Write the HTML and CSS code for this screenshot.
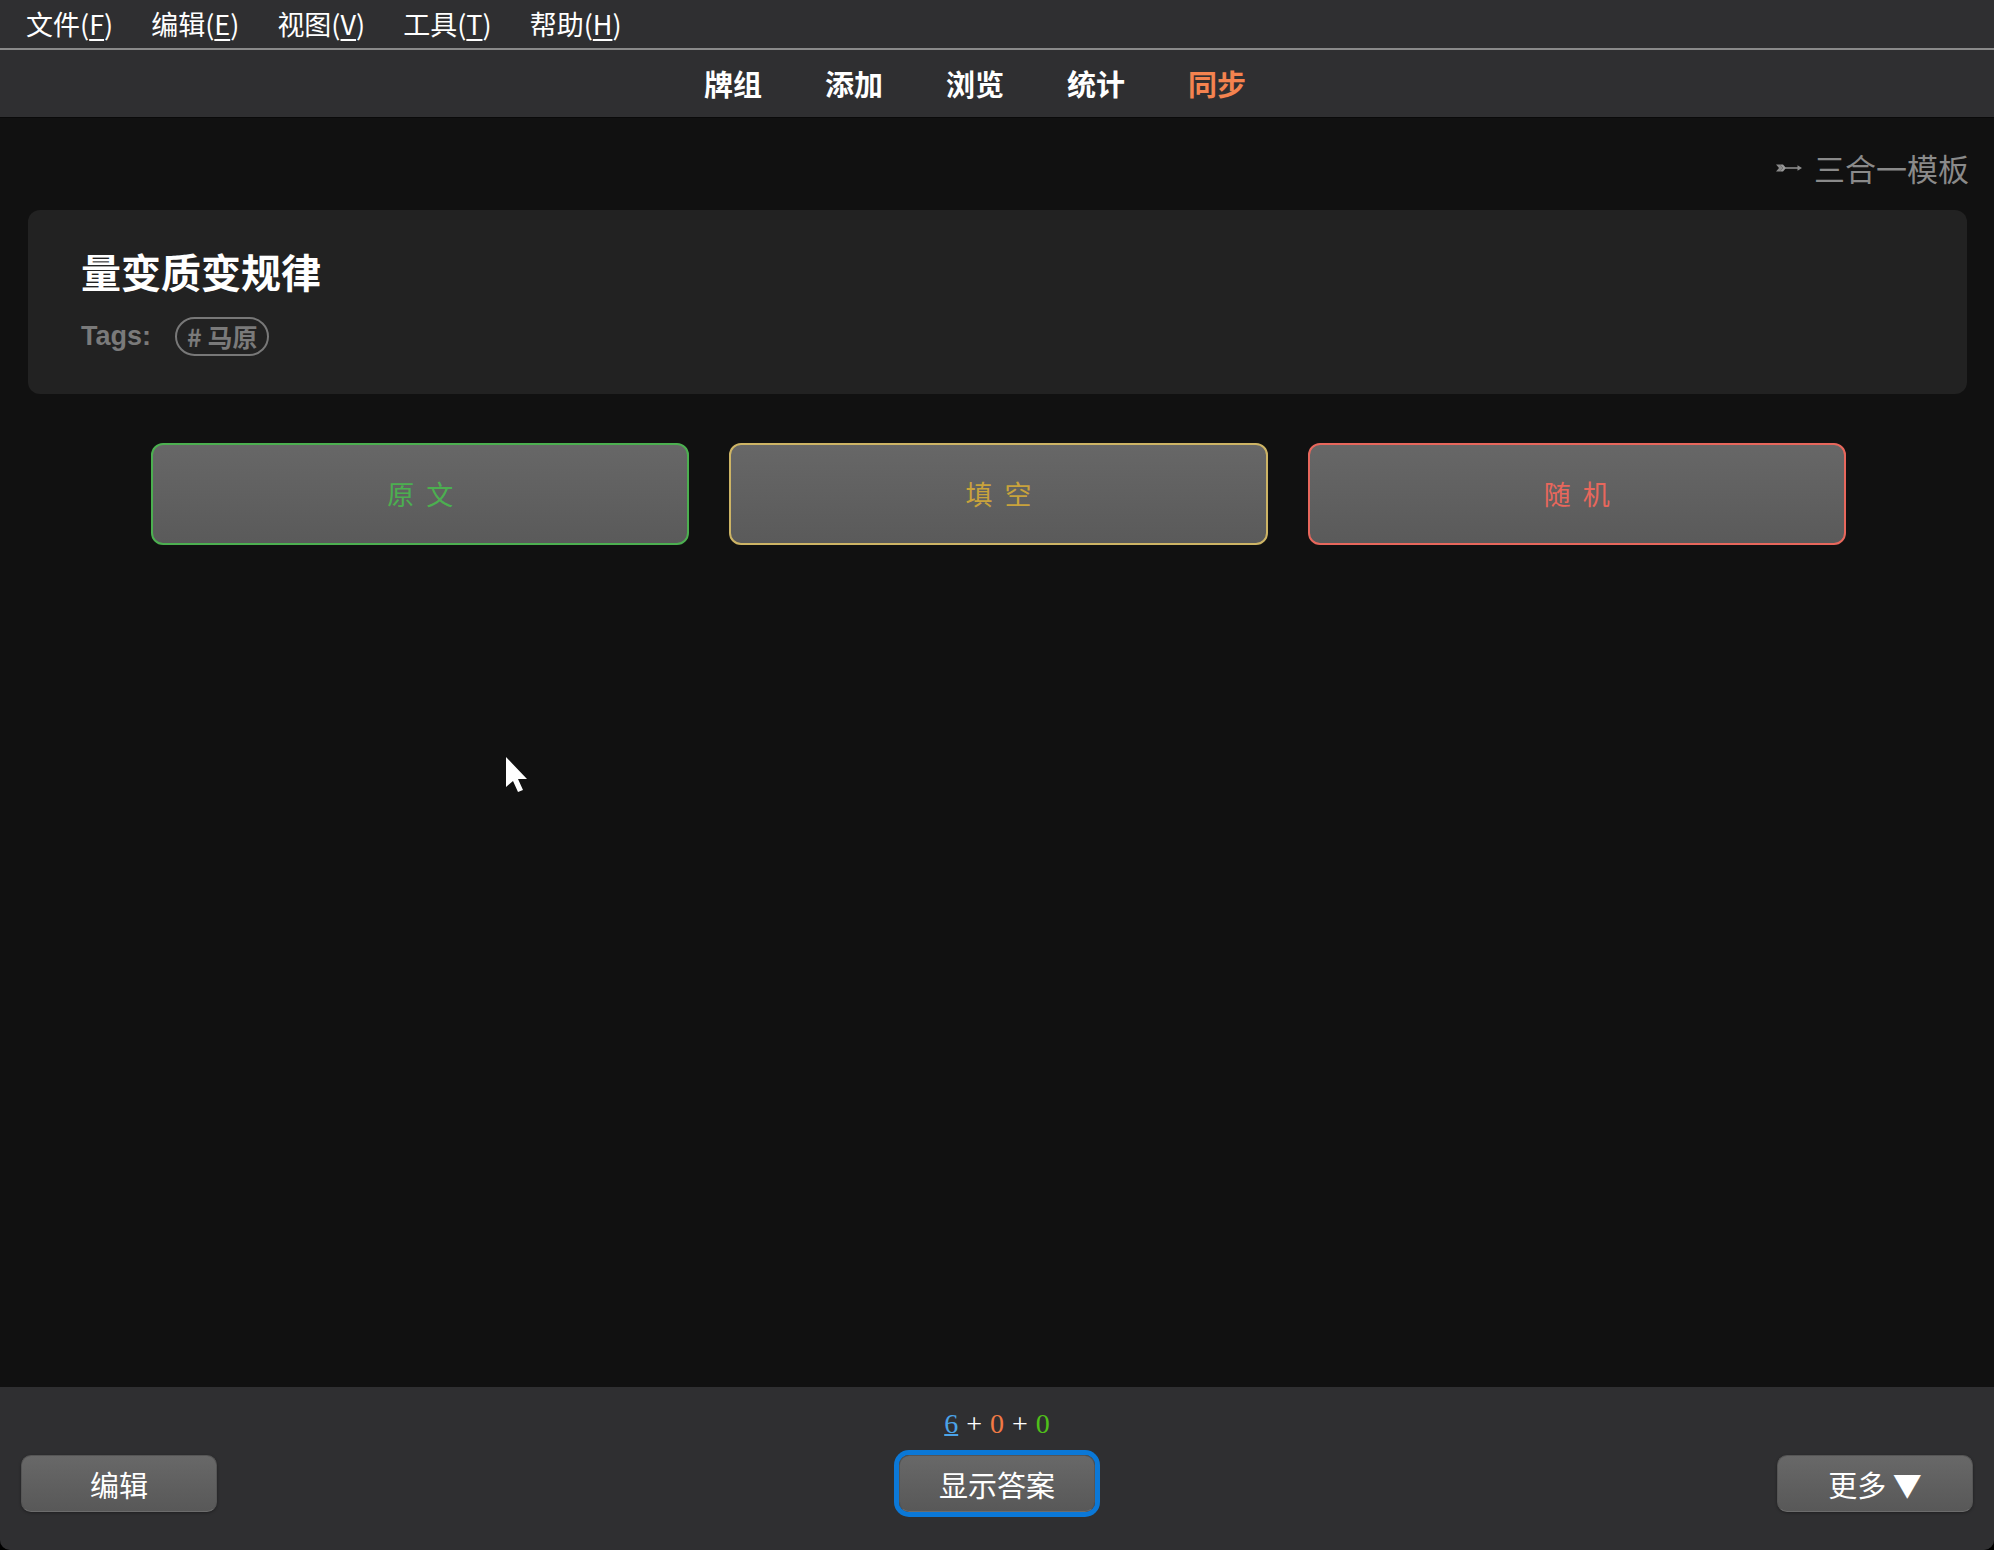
FILE: index.html
```html
<!DOCTYPE html>
<html lang="zh-CN">
<head>
<meta charset="utf-8">
<title>Anki</title>
<link rel="stylesheet" href="styles.css">
</head>
<body>
<div class="app">
  <div class="menubar">
    <span class="menu-item">文件(<u>F</u>)</span>
    <span class="menu-item">编辑(<u>E</u>)</span>
    <span class="menu-item">视图(<u>V</u>)</span>
    <span class="menu-item">工具(<u>T</u>)</span>
    <span class="menu-item">帮助(<u>H</u>)</span>
  </div>
  <nav class="toolbar">
    <span class="tb-item">牌组</span>
    <span class="tb-item">添加</span>
    <span class="tb-item">浏览</span>
    <span class="tb-item">统计</span>
    <span class="tb-item tb-sync">同步</span>
  </nav>
  <main class="review">
    <div class="template-label">
      <svg class="arrow-icon" width="27" height="12" viewBox="0 0 27 12">
        <path d="M0 2.5 L4 2.5 L7 6 L4 9.5 L0 9.5 L3 6 Z" fill="#8a8a8a"/>
        <path d="M4 2.5 L7 2.5 L10 6 L7 9.5 L4 9.5 L7 6 Z" fill="#9a9a9a"/>
        <path d="M9 6 H23" stroke="#8a8a8a" stroke-width="1.6"/>
        <path d="M21.5 3.3 L26 6 L21.5 8.7 Z" fill="#8a8a8a"/>
      </svg>
      <span class="template-name">三合一模板</span>
    </div>
    <section class="card">
      <h1 class="card-title">量变质变规律</h1>
      <div class="tags">
        <span class="tags-label">Tags:</span>
        <span class="tag-pill"># 马原</span>
      </div>
    </section>
    <div class="mode-buttons">
      <button class="mode-btn mode-green">原文</button>
      <button class="mode-btn mode-yellow">填空</button>
      <button class="mode-btn mode-red">随机</button>
    </div>
    <svg class="cursor" width="24" height="38" viewBox="0 0 24 38">
      <polygon points="0,0 0,30 7,24 12,35 17,33 12,22 21,22" fill="#ffffff"/>
    </svg>
  </main>
  <footer class="bottombar">
    <div class="counts"><u class="c-new">6</u> + <span class="c-learn">0</span> + <span class="c-due">0</span></div>
    <div class="actions">
      <div class="act-left"><button class="btn">编辑</button></div>
      <div class="act-center"><button class="btn btn-answer">显示答案</button></div>
      <div class="act-right"><button class="btn">更多 ▼</button></div>
    </div>
  </footer>
</div>
</body>
</html>
```

FILE: styles.css
```css
html {
  background: #000;
}
body {
  margin: 0;
  font-family: "Noto Sans CJK SC", "Noto Sans", sans-serif;
  color: #fff;
}
.app {
  width: 1994px;
  height: 1550px;
  display: flex;
  flex-direction: column;
  background: #111111;
  border-radius: 0 0 10px 10px;
  overflow: hidden;
}
.menubar {
  height: 48px;
  border-bottom: 2px solid #8a8a8a;
  background: #2f2f31;
  display: flex;
  align-items: center;
  gap: 38px;
  padding-left: 26px;
  font-size: 27px;
  line-height: 48px;
}
.menu-item u {
  text-underline-offset: 4px;
  text-decoration-thickness: 2px;
}
.toolbar {
  height: 68px;
  box-sizing: border-box;
  border-bottom: 1px solid #0a0a0a;
  background: #2f2f31;
  display: flex;
  justify-content: center;
  align-items: center;
  gap: 63px;
  padding-right: 44px;
  padding-bottom: 2px;
  font-size: 29px;
  font-weight: 700;
}
.tb-sync {
  color: #f4834f;
}
.review {
  flex: 1;
  position: relative;
  padding: 30px 25px 0 28px;
}
.template-label {
  height: 40px;
  display: flex;
  justify-content: flex-end;
  align-items: center;
  gap: 11px;
  color: #8a8a8a;
  font-size: 31px;
  line-height: 40px;
}
.card {
  margin: 22px 2px 0 0;
  background: #222222;
  border-radius: 12px;
  padding: 37px 54px 38px 53px;
}
.card-title {
  margin: 0;
  font-size: 40px;
  line-height: 48px;
  font-weight: 700;
}
.tags {
  margin-top: 21px;
  display: flex;
  align-items: center;
  gap: 24px;
  height: 40px;
  color: #7a7a7a;
  font-weight: 700;
}
.tags-label {
  font-family: "Liberation Sans", Arial, sans-serif;
  font-size: 27px;
}
.tag-pill {
  box-sizing: border-box;
  height: 39px;
  border: 2px solid #787878;
  border-radius: 20px;
  padding: 0 10px;
  font-size: 25px;
  line-height: 35px;
}
.mode-buttons {
  width: 1695px;
  margin: 49px auto 0;
  display: flex;
  gap: 40px;
}
.mode-btn {
  flex: 1;
  height: 102px;
  box-sizing: border-box;
  border: 2px solid;
  border-radius: 12px;
  background: linear-gradient(#676767, #5a5a5a);
  font-family: "Noto Sans CJK SC", sans-serif;
  font-size: 27px;
  letter-spacing: 12px;
  text-indent: 12px;
  padding-bottom: 2px;
}
.mode-green {
  border-color: #4caf50;
  color: #4caf50;
}
.mode-yellow {
  border-color: #cdb465;
  color: #c9a33c;
}
.mode-red {
  border-color: #e8675c;
  color: #e8675c;
}
.cursor {
  position: absolute;
  left: 506px;
  top: 639px;
}
.bottombar {
  height: 163px;
  box-sizing: border-box;
  background: #2f2f31;
  padding: 19px 21px 0;
}
.counts {
  text-align: center;
  font-family: "Liberation Serif", "Times New Roman", serif;
  font-size: 28px;
  line-height: 36px;
  color: #ffffff;
  word-spacing: 1px;
}
.c-new {
  color: #4ba3e8;
  text-decoration-thickness: 2px;
}
.c-learn {
  color: #f27a45;
}
.c-due {
  color: #4fc01a;
}
.actions {
  margin-top: 13px;
  display: grid;
  grid-template-columns: 1fr auto 1fr;
  align-items: center;
}
.act-right {
  display: flex;
  justify-content: flex-end;
}
.btn {
  width: 196px;
  height: 57px;
  box-sizing: border-box;
  border: 1px solid #555;
  border-bottom-color: #6c6c6c;
  border-radius: 10px;
  background: linear-gradient(#686868, #585858);
  color: #fff;
  font-family: "Noto Sans CJK SC", sans-serif;
  font-size: 29px;
  box-shadow: 0 1px 3px rgba(0, 0, 0, 0.35);
}
.btn-answer {
  box-shadow: 0 0 0 5px #0b78d7;
}
```
